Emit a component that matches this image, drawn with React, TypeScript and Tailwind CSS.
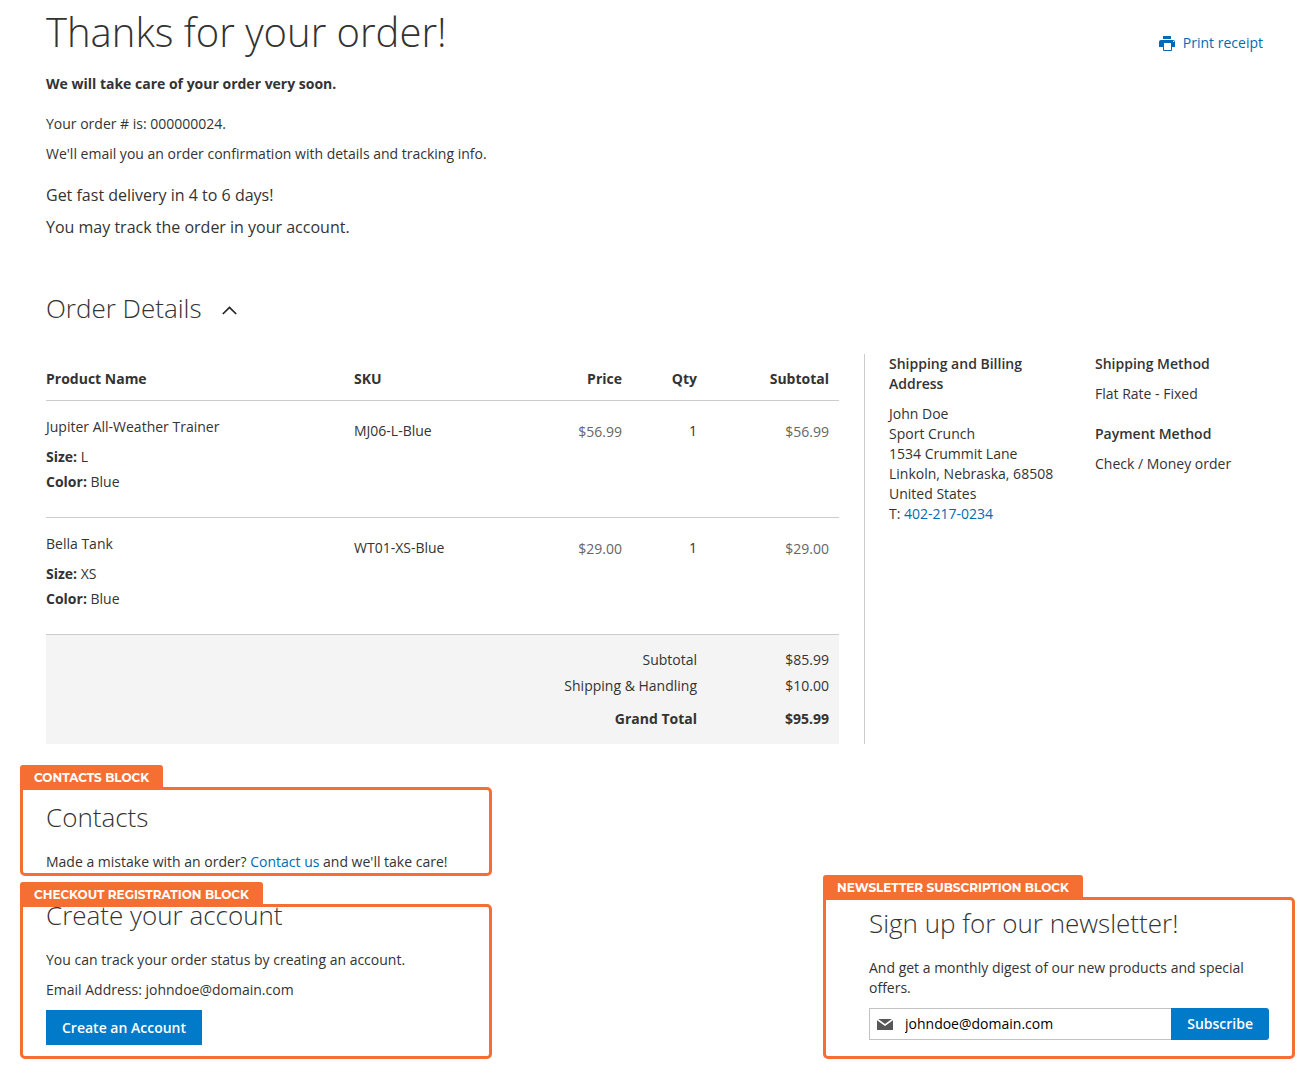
import type { ReactNode } from "react";

const items = [
  { name: "Jupiter All-Weather Trainer", size: "L", color: "Blue", sku: "MJ06-L-Blue", price: "$56.99", qty: 1 },
  { name: "Bella Tank", size: "XS", color: "Blue", sku: "WT01-XS-Blue", price: "$29.00", qty: 1 },
];

function PrinterIcon() {
  return (
    <svg width="16" height="15" viewBox="0 0 16 15" fill="currentColor" aria-hidden="true">
      <path d="M4 0h8v3H4z" />
      <path fillRule="evenodd" d="M2 4h12a2 2 0 0 1 2 2v5h-3v3.2a.8.8 0 0 1-.8.8H4.800a.8.8 0 0 1-.8-.8V11H0V6a2 2 0 0 1 2-2zm3 3v7h7V7zm9-2v1h1V5z" />
    </svg>
  );
}

function MailIcon() {
  return (
    <svg className="pointer-events-none absolute top-[11px] left-2" width="16" height="11" viewBox="0 0 16 11" fill="#575757" aria-hidden="true">
      <path d="M1.200 0h13.600L8 5z" />
      <path d="M0 1.200l8 5.900 8-5.900V11H0z" />
    </svg>
  );
}

function Block({ label, className, children }: { label: string; className?: string; children: ReactNode }) {
  return (
    <section className="w-[472px] max-w-full">
      <div className="flex">
        <div className="h-[22px] rounded-t-[3px] bg-[#f66f32] px-[14px] font-[Montserrat,Inter,sans-serif] text-[12px] leading-[25px] font-bold whitespace-nowrap text-white">
          {label}
        </div>
      </div>
      <div className={`overflow-hidden rounded-[5px] rounded-tl-none border-3 border-[#f66f32] ${className}`}>{children}</div>
    </section>
  );
}

export default function App() {
  return (
    <div className="bg-white pt-[10px] pb-[18px] font-['Open_Sans',sans-serif] text-[14px] leading-5 text-[#333]">
      <main className="px-[46px]">
        <div className="flex items-start justify-between">
          <h1 className="text-[40px] leading-[44px] font-light">Thanks for your order!</h1>
          <a href="#print" className="mt-[23px] mr-[3px] flex items-center gap-2 text-[#006bb4]">
            <PrinterIcon />
            Print receipt
          </a>
        </div>
        <p className="mt-5 font-bold">We will take care of your order very soon.</p>
        <p className="mt-5">Your order # is: 000000024.</p>
        <p className="mt-[10px]">We'll email you an order confirmation with details and tracking info.</p>
        <div className="mt-[15px] text-[16px] leading-8">
          <p>Get fast delivery in 4 to 6 days!</p>
          <p>You may track the order in your account.</p>
        </div>

        <div className="mt-[49px] flex items-center gap-5">
          <h2 className="text-[26px] leading-8 font-light">Order Details</h2>
          <button type="button" aria-label="Toggle order details" className="mt-1">
            <svg width="15" height="9" viewBox="0 0 15 9" fill="none" stroke="#222" strokeWidth="1.700">
              <path d="M.8 8l6.700-6.600L14.200 8" />
            </svg>
          </button>
        </div>

        <div className="mt-[30px] flex">
          <div className="mr-[25px] flex-1">
            <table className="w-full table-fixed border-collapse">
              <colgroup>
                <col />
                <col className="w-[200px]" />
                <col className="w-[88px]" />
                <col className="w-[75px]" />
                <col className="w-[132px]" />
              </colgroup>
              <thead>
                <tr className="border-b border-[#ccc]">
                  <th className="pt-[15px] pb-[11px] text-left font-bold">Product Name</th>
                  <th className="px-[10px] pt-[15px] pb-[11px] text-left font-bold">SKU</th>
                  <th className="px-[10px] pt-[15px] pb-[11px] text-right font-bold">Price</th>
                  <th className="px-[10px] pt-[15px] pb-[11px] text-right font-bold">Qty</th>
                  <th className="px-[10px] pt-[15px] pb-[11px] text-right font-bold">Subtotal</th>
                </tr>
              </thead>
              <tbody>
                {items.map((item) => (
                  <tr key={item.sku} className="border-b border-[#ccc] align-top">
                    <td className="pt-4 pb-[25px]">
                      <div>{item.name}</div>
                      <div className="mt-[10px]">
                        <b>Size:</b> {item.size}
                      </div>
                      <div className="mt-[5px]">
                        <b>Color:</b> {item.color}
                      </div>
                    </td>
                    <td className="px-[10px] pt-5">{item.sku}</td>
                    <td className="px-[10px] pt-[21px] text-right text-[#666]">{item.price}</td>
                    <td className="px-[10px] pt-5 text-right">{item.qty}</td>
                    <td className="px-[10px] pt-[21px] text-right text-[#666]">{item.price}</td>
                  </tr>
                ))}
              </tbody>
              <tfoot className="bg-[#f4f4f4] text-right">
                <tr>
                  <th colSpan={4} className="px-[10px] pt-[15px] pb-[3px] font-normal">Subtotal</th>
                  <td className="px-[10px] pt-[15px] pb-[3px]">$85.99</td>
                </tr>
                <tr>
                  <th colSpan={4} className="px-[10px] py-[3px] font-normal">Shipping &amp; Handling</th>
                  <td className="px-[10px] py-[3px]">$10.00</td>
                </tr>
                <tr>
                  <th colSpan={4} className="px-[10px] pt-[10px] pb-[15px] font-bold">Grand Total</th>
                  <td className="px-[10px] pt-[10px] pb-[15px] font-bold">$95.99</td>
                </tr>
              </tfoot>
            </table>
          </div>

          <aside className="grid w-[402px] grid-cols-2 gap-x-[35px] border-l border-[#ccc] pl-6">
            <div>
              <h3 className="font-semibold">Shipping and Billing Address</h3>
              <address className="mt-[10px] not-italic">
                John Doe
                <br />
                Sport Crunch
                <br />
                1534 Crummit Lane
                <br />
                Linkoln, Nebraska, 68508
                <br />
                United States
                <br />
                T: <a href="tel:402-217-0234" className="text-[#006bb4]">402-217-0234</a>
              </address>
            </div>
            <div>
              <h3 className="font-semibold">Shipping Method</h3>
              <p className="mt-[10px]">Flat Rate - Fixed</p>
              <h3 className="mt-5 font-semibold">Payment Method</h3>
              <p className="mt-[10px]">Check / Money order</p>
            </div>
          </aside>
        </div>
      </main>

      <div className="mt-[21px] flex items-end justify-between pr-[17px] pl-5">
        <div className="flex flex-col gap-[6px]">
          <Block label="CONTACTS BLOCK" className="px-[23px] pt-[11px]">
            <h2 className="text-[26px] leading-8 font-light">Contacts</h2>
            <p className="mt-[19px] pb-[1px]">
              Made a mistake with an order? <a href="#contact" className="text-[#006bb4]">Contact us</a> and we'll take care!
            </p>
          </Block>
          <Block label="CHECKOUT REGISTRATION BLOCK" className="px-[23px] pb-[11px]">
            <h2 className="-mt-2 text-[26px] leading-8 font-light">Create your account</h2>
            <p className="mt-[19px]">You can track your order status by creating an account.</p>
            <p className="mt-[10px]">Email Address: johndoe@domain.com</p>
            <button type="button" className="mt-[10px] h-[35px] bg-[#007ac9] px-4 font-semibold text-white">
              Create an Account
            </button>
          </Block>
        </div>

        <Block label="NEWSLETTER SUBSCRIPTION BLOCK" className="pt-[7px] pr-[23px] pb-4 pl-[43px]">
          <h2 className="text-[26px] leading-8 font-light">Sign up for our newsletter!</h2>
          <p className="mt-[19px]">And get a monthly digest of our new products and special offers.</p>
          <form className="mt-[10px] flex">
            <div className="relative flex-1">
              <MailIcon />
              <input
                type="email"
                aria-label="Email address"
                defaultValue="johndoe@domain.com"
                className="h-8 w-full rounded-l-[1px] border border-r-0 border-[#c2c2c2] bg-white pb-[2px] pl-[35px] text-black outline-none"
              />
            </div>
            <button type="button" className="h-8 rounded-r-[3px] bg-[#007ac9] px-4 font-semibold text-white">
              Subscribe
            </button>
          </form>
        </Block>
      </div>
    </div>
  );
}
